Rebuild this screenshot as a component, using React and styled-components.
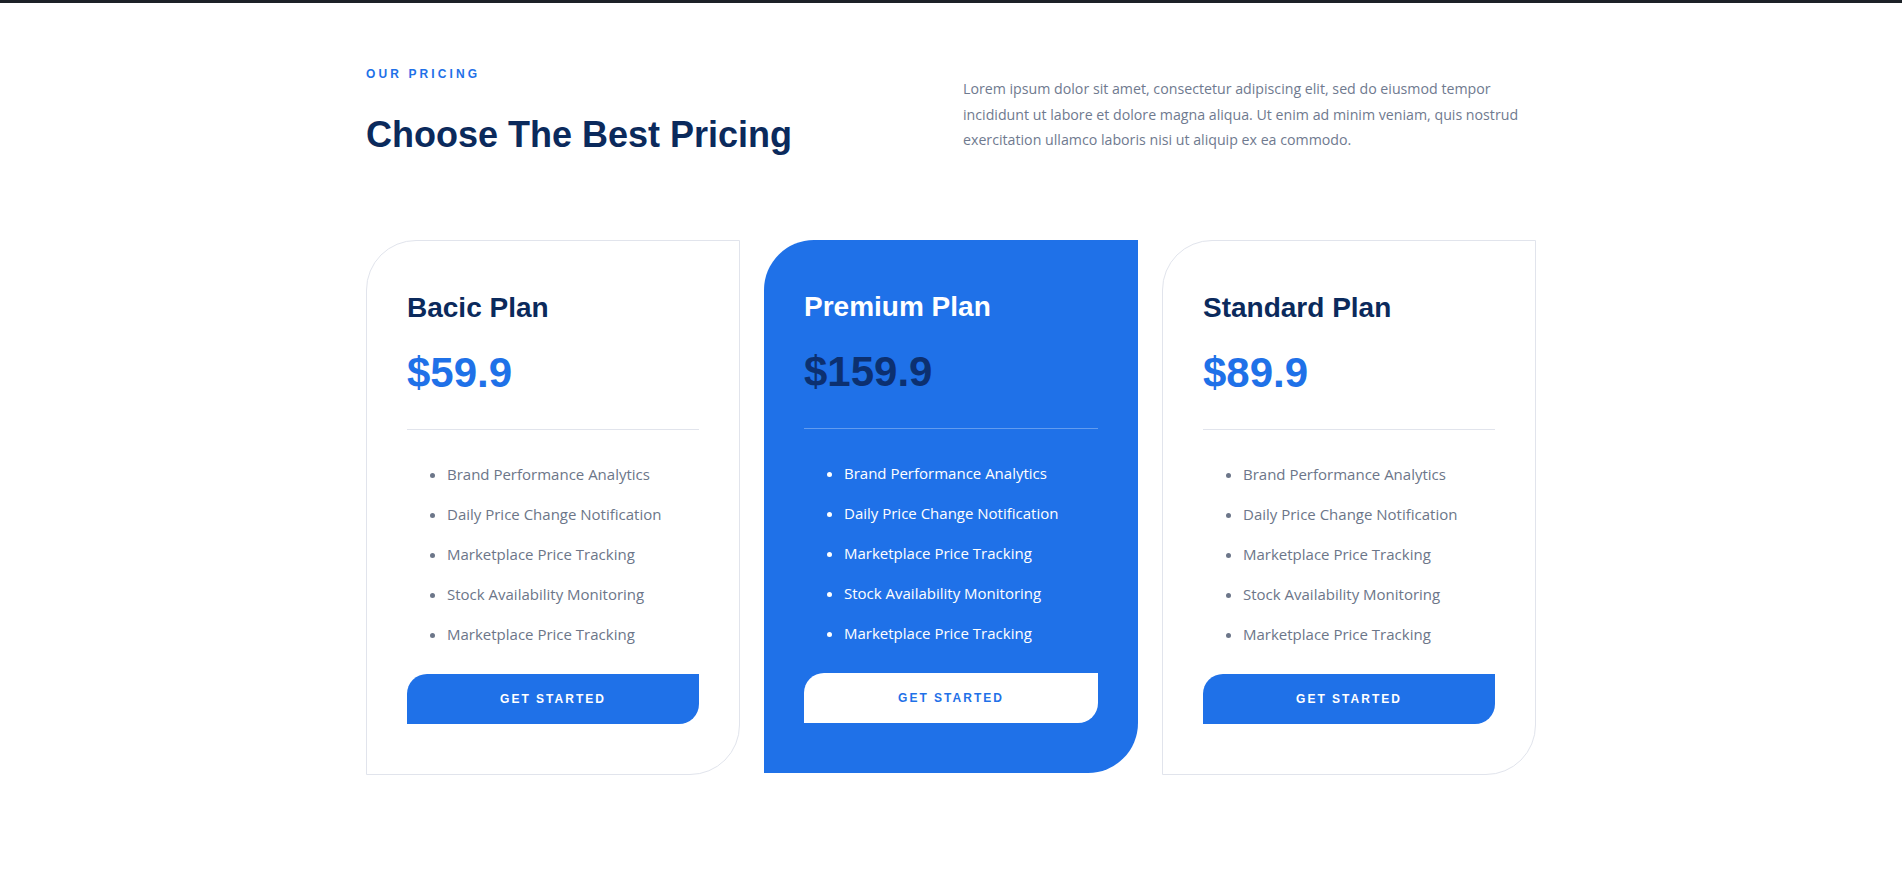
import React from "react";
import styled, { createGlobalStyle } from "styled-components";

const GlobalStyle = createGlobalStyle`
  html, body { margin: 0; padding: 0; background: #ffffff; }
  body { border-top: 3px solid #1c2127; font-family: "Open Sans", "Noto Sans", sans-serif; }
  * { box-sizing: border-box; }
`;

const Section = styled.section`
  width: 1170px;
  margin: 0 auto;
  padding: 63px 0 80px;
`;

const Header = styled.header`
  display: grid;
  grid-template-columns: 1fr 573px;
  align-items: start;
  margin-bottom: 84px;
`;

const Label = styled.div`
  font-family: "Liberation Sans", Arial, sans-serif;
  font-weight: 700;
  font-size: 12px;
  line-height: 16px;
  letter-spacing: 3.1px;
  color: #1f71e8;
  text-transform: uppercase;
`;

const Heading = styled.h2`
  margin: 31px 0 0;
  font-family: "Liberation Sans", Arial, sans-serif;
  font-weight: 700;
  font-size: 36px;
  line-height: 1.2;
  color: #0b2a5c;
`;

const Intro = styled.p`
  margin: 10px 0 0;
  font-size: 14.2px;
  line-height: 25.5px;
  color: #6f7a8f;
`;

const Cards = styled.div`
  display: grid;
  grid-template-columns: repeat(3, 374px);
  gap: 24px;
  align-items: start;
`;

const Card = styled.div`
  border-radius: 50px 0 50px 0;
  padding: 50px 40px;
  background: ${(p) => (p.$featured ? "#1f71e8" : "#ffffff")};
  border: ${(p) => (p.$featured ? "none" : "1px solid #e1e4ec")};
`;

const PlanName = styled.h3`
  margin: 0 0 24px;
  font-family: "Liberation Sans", Arial, sans-serif;
  font-weight: 700;
  font-size: 28px;
  line-height: 1.2;
  color: ${(p) => (p.$featured ? "#ffffff" : "#0b2a5c")};
`;

const Price = styled.div`
  font-family: "Liberation Sans", Arial, sans-serif;
  font-weight: 700;
  font-size: 42px;
  line-height: 48px;
  color: ${(p) => (p.$featured ? "#0c3070" : "#1f71e8")};
`;

const Divider = styled.hr`
  margin: 32px 0 0;
  border: none;
  height: 1px;
  background: ${(p) => (p.$featured ? "rgba(255,255,255,0.3)" : "#e1e4ec")};
`;

const Features = styled.ul`
  margin: 32px 0 28px;
  padding-left: 40px;
  list-style: disc;
  color: ${(p) => (p.$featured ? "#ffffff" : "#6c7689")};
`;

const Feature = styled.li`
  font-size: 15px;
  line-height: 24px;
  margin-bottom: 16px;
  &:last-child { margin-bottom: 0; }
`;

const Button = styled.button`
  display: block;
  width: 100%;
  height: 50px;
  border: none;
  border-radius: 20px 0 20px 0;
  cursor: pointer;
  font-family: "Liberation Sans", Arial, sans-serif;
  font-weight: 700;
  font-size: 12px;
  letter-spacing: 2px;
  text-transform: uppercase;
  background: ${(p) => (p.$featured ? "#ffffff" : "#1f71e8")};
  color: ${(p) => (p.$featured ? "#1f71e8" : "#ffffff")};
`;

const features = [
  "Brand Performance Analytics",
  "Daily Price Change Notification",
  "Marketplace Price Tracking",
  "Stock Availability Monitoring",
  "Marketplace Price Tracking",
];

const plans = [
  { name: "Bacic Plan", price: "$59.9" },
  { name: "Premium Plan", price: "$159.9", featured: true },
  { name: "Standard Plan", price: "$89.9" },
];

export default function App() {
  return (
    <>
      <GlobalStyle />
      <Section>
        <Header>
          <div>
            <Label>Our Pricing</Label>
            <Heading>Choose The Best Pricing</Heading>
          </div>
          <Intro>
            Lorem ipsum dolor sit amet, consectetur adipiscing elit, sed do eiusmod tempor
            incididunt ut labore et dolore magna aliqua. Ut enim ad minim veniam, quis nostrud
            exercitation ullamco laboris nisi ut aliquip ex ea commodo.
          </Intro>
        </Header>
        <Cards>
          {plans.map((p) => (
            <Card key={p.name} $featured={p.featured}>
              <PlanName $featured={p.featured}>{p.name}</PlanName>
              <Price $featured={p.featured}>{p.price}</Price>
              <Divider $featured={p.featured} />
              <Features $featured={p.featured}>
                {features.map((f, i) => (
                  <Feature key={i}>{f}</Feature>
                ))}
              </Features>
              <Button $featured={p.featured}>Get Started</Button>
            </Card>
          ))}
        </Cards>
      </Section>
    </>
  );
}
